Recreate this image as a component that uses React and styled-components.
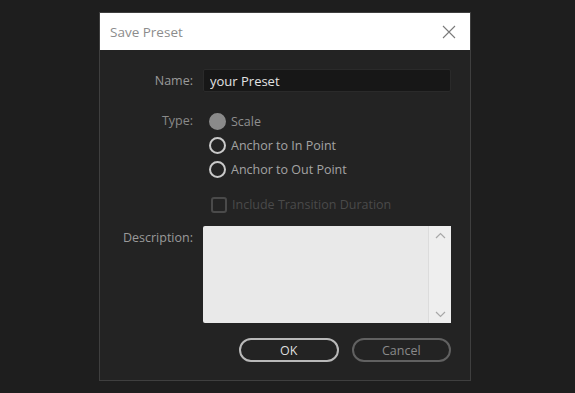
import React, { useState } from 'react';
import styled, { createGlobalStyle } from 'styled-components';

const GlobalStyle = createGlobalStyle`
  html, body {
    margin: 0;
    background: #1e1e1e;
    font-family: 'Open Sans', 'Noto Sans', sans-serif;
  }
`;

const Page = styled.div`
  width: 575px;
  height: 393px;
  padding: 12px 0 0 99px;
  box-sizing: border-box;
`;

const Dialog = styled.div`
  width: 372px;
  height: 369px;
  box-sizing: border-box;
  border: 1px solid #3f3f3f;
  background: #232323;
  display: flex;
  flex-direction: column;
`;

const TitleBar = styled.header`
  height: 37px;
  background: #ffffff;
  display: flex;
  align-items: center;
  justify-content: space-between;
  padding: 0 14px 0 10px;
`;

const TitleText = styled.span`
  font-family: 'Open Sans', sans-serif;
  font-size: 13.5px;
  color: #8c8c8c;
`;

const Form = styled.div`
  display: grid;
  grid-template-columns: 93px 248px;
  column-gap: 10px;
  padding-top: 19px;
  align-items: start;
`;

const Label = styled.label`
  font-size: 12.5px;
  color: ${(p) => p.color || '#9a9a9a'};
  text-align: right;
  line-height: ${(p) => p.lh || '23px'};
  margin-top: ${(p) => p.top || 0}px;
`;

const TextInput = styled.input`
  height: 23px;
  box-sizing: border-box;
  border: 1px solid #2a2a2a;
  border-radius: 2px;
  background: #171717;
  color: #e2e2e2;
  font-family: inherit;
  font-size: 13px;
  padding: 0 6px;
  outline: none;
`;

const RadioGroup = styled.div`
  display: flex;
  flex-direction: column;
  margin-top: 17px;
  padding-left: 6px;
`;

const OptionRow = styled.div`
  display: flex;
  align-items: center;
  height: 24px;
  gap: 5px;
  font-size: 12.5px;
  color: ${(p) => (p.disabled ? '#8f8f8f' : '#a3a3a3')};
  cursor: pointer;
`;

const RadioDot = styled.span`
  width: 17px;
  height: 17px;
  box-sizing: border-box;
  border-radius: 50%;
  border: 2px solid ${(p) => (p.filled ? '#8a8a8a' : '#c9c9c9')};
  background: ${(p) => (p.filled ? '#8a8a8a' : 'transparent')};
`;

const CheckRow = styled.div`
  grid-column: 2;
  display: flex;
  align-items: center;
  gap: 5px;
  margin-top: 15px;
  padding-left: 8px;
  font-size: 12.5px;
  color: #4a4a4a;
`;

const CheckBox = styled.span`
  width: 16px;
  height: 16px;
  box-sizing: border-box;
  border: 2px solid #4a4a4a;
  border-radius: 3px;
`;

const TextAreaBox = styled.div`
  margin-top: 13px;
  height: 97px;
  background: #e9e9e9;
  border-radius: 2px;
  display: flex;
`;

const TextArea = styled.textarea`
  flex: 1;
  border: none;
  resize: none;
  background: transparent;
  outline: none;
  font-family: inherit;
  font-size: 12px;
`;

const ScrollBar = styled.div`
  width: 22px;
  border-left: 1px solid #dcdcdc;
  background: #eeeeee;
  display: flex;
  flex-direction: column;
  justify-content: space-between;
  align-items: center;
  padding: 6px 0 5px;
`;

const Buttons = styled.div`
  grid-column: 2;
  display: flex;
  justify-content: flex-end;
  gap: 13px;
  margin-top: 15px;
  padding-left: 36px;
`;

const PillButton = styled.button`
  width: 100px;
  height: 24px;
  border-radius: 12px;
  border: 2px solid ${(p) => (p.primary ? '#b9b9b9' : '#616161')};
  background: transparent;
  color: ${(p) => (p.primary ? '#dedede' : '#8a8a8a')};
  font-family: inherit;
  font-size: 12.5px;
  padding: 0;
`;

const Chevron = ({ up }) => (
  <svg width="11" height="7" viewBox="0 0 11 7">
    <path
      d={up ? 'M1 6 L5.5 1.5 L10 6' : 'M1 1 L5.5 5.5 L10 1'}
      fill="none"
      stroke="#a8a8a8"
      strokeWidth="1.2"
    />
  </svg>
);

const CloseIcon = () => (
  <svg width="14" height="14" viewBox="0 0 14 14">
    <path d="M1 1 L13 13 M13 1 L1 13" stroke="#7a7a7a" strokeWidth="1.1" />
  </svg>
);

const OPTIONS = [
  { id: 'scale', label: 'Scale', disabled: true },
  { id: 'in', label: 'Anchor to In Point' },
  { id: 'out', label: 'Anchor to Out Point' },
];

export default function App() {
  const [name, setName] = useState('your Preset');

  return (
    <Page>
      <GlobalStyle />
      <Dialog>
        <TitleBar>
          <TitleText>Save Preset</TitleText>
          <CloseIcon />
        </TitleBar>
        <Form>
          <Label>Name:</Label>
          <TextInput value={name} onChange={(e) => setName(e.target.value)} />

          <Label color="#8a8a8a" top={19} lh="20px">
            Type:
          </Label>
          <RadioGroup>
            {OPTIONS.map((o) => (
              <OptionRow key={o.id} disabled={o.disabled}>
                <RadioDot filled={o.disabled} />
                {o.label}
              </OptionRow>
            ))}
          </RadioGroup>

          <CheckRow>
            <CheckBox />
            Include Transition Duration
          </CheckRow>

          <Label top={13} lh="24px">
            Description:
          </Label>
          <TextAreaBox>
            <TextArea />
            <ScrollBar>
              <Chevron up />
              <Chevron />
            </ScrollBar>
          </TextAreaBox>

          <Buttons>
            <PillButton primary>OK</PillButton>
            <PillButton>Cancel</PillButton>
          </Buttons>
        </Form>
      </Dialog>
    </Page>
  );
}
